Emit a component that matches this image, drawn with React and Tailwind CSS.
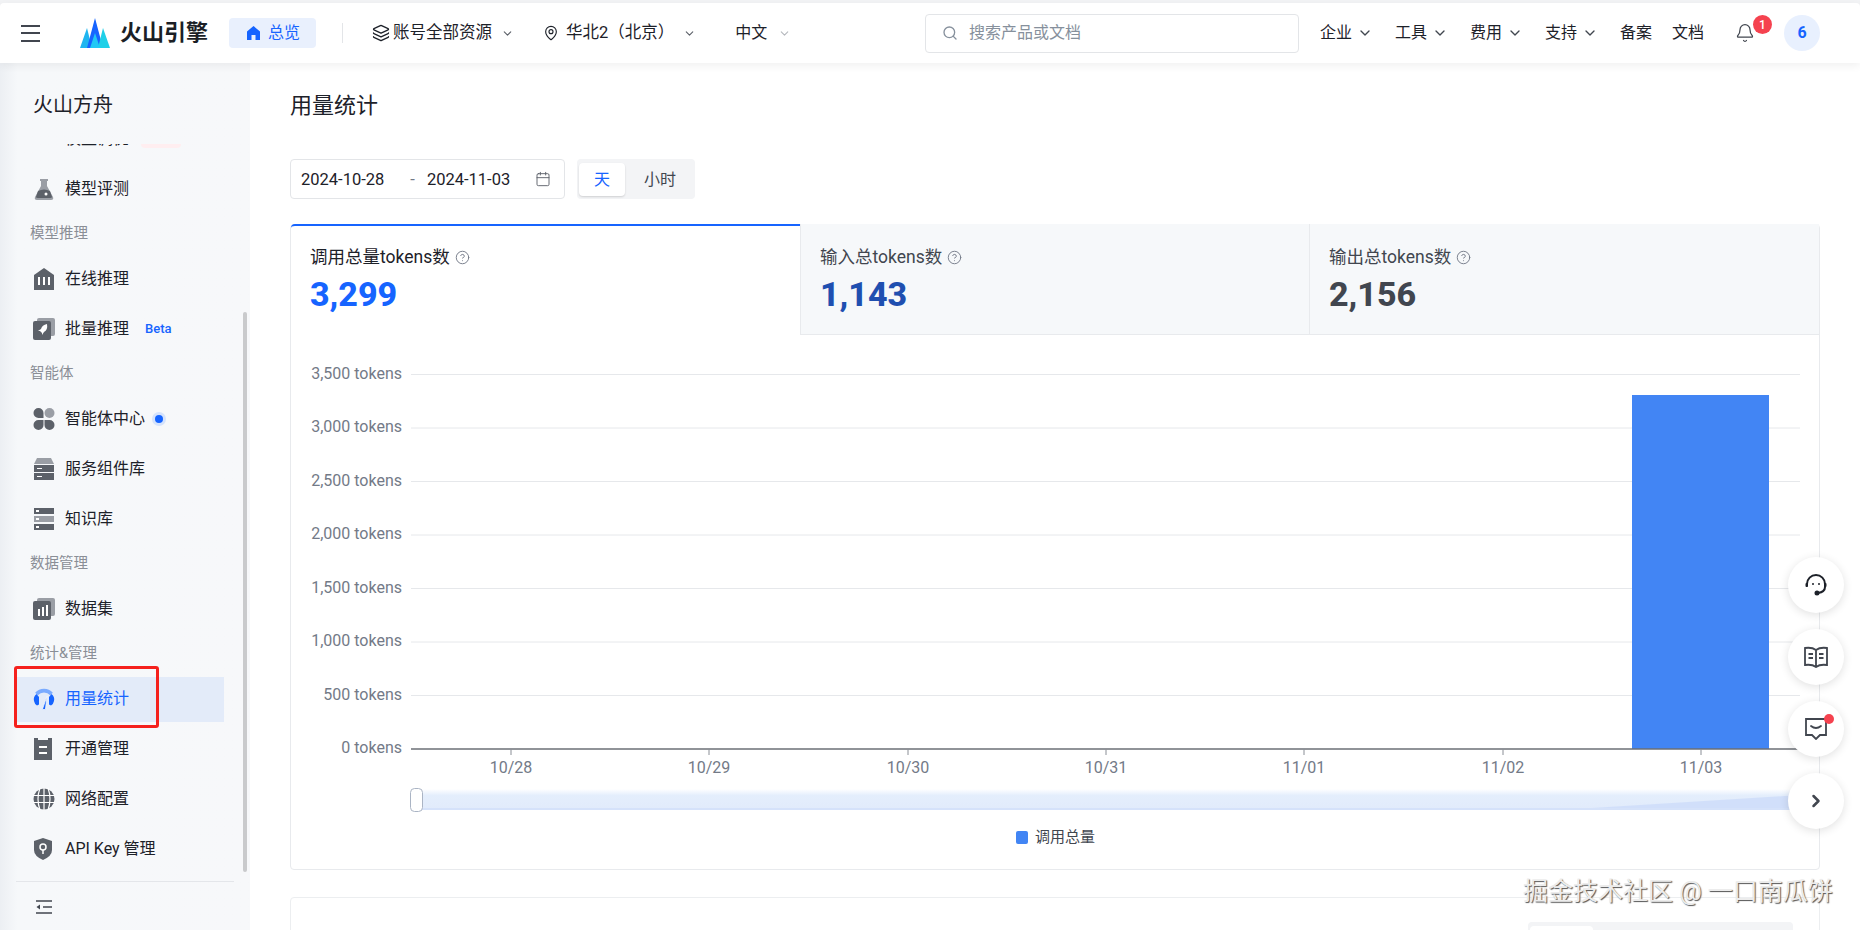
import React from 'react'
import { ChevronDown, ChevronRight, Search, Calendar, CircleHelp, Bell, MapPin, Layers } from 'lucide-react'

const fontStack = "font-['Roboto','Noto_Sans_CJK_SC',sans-serif]"

function Logo() {
    return (
        <svg width="30" height="30" viewBox="0 0 30 30">
            <polygon points="0,30 7,10 12,30" fill="#1fb5f0" />
            <polygon points="7,30 15,0 23,30" fill="#1664ff" />
            <polygon points="18,30 23,10 30,30" fill="#1fd0e8" />
            <polygon points="10,30 15,15 20,30" fill="#21c8f5" />
        </svg>
    )
}

function ItemIcon({ name }) {
    const c = '#5c6169'
    const l = '#9a9ea5'
    if (name === 'flask') return (
        <svg width="22" height="22" viewBox="0 0 22 22"><path d="M7 1h8v2h-1v5l6 11q1 3-2 3H4q-3 0-2-3l6-11V3H7z" fill={l} /><path d="M5 13q6-3 12 0l2 6q0 1-2 1H5q-2 0-2-1z" fill={c} /><circle cx="13" cy="16" r="1.5" fill="#fff" /></svg>
    )
    if (name === 'bank') return (
        <svg width="22" height="22" viewBox="0 0 22 22"><path d="M11 0l10 7v15H1V7z" fill={c} /><path d="M5 9h2v8H5zM10 9h2v8h-2zM15 9h2v8h-2z" fill="#fff" /></svg>
    )
    if (name === 'rocket') return (
        <svg width="22" height="22" viewBox="0 0 22 22"><rect x="4" y="0" width="18" height="18" rx="2" fill={l} /><rect x="0" y="3" width="18" height="19" rx="2" fill={c} /><path d="M14 6q-5 1-6 5l-3 2 2 0 2 2 0 2 2-3q4-2 3-8z" fill="#fff" /></svg>
    )
    if (name === 'clover') return (
        <svg width="22" height="22" viewBox="0 0 22 22"><path d="M5.5 0a5 5 0 0 1 5 5v5h-5a5 5 0 0 1 0-10z" fill={c} /><circle cx="16.500" cy="5" r="5" fill={l} /><path d="M5.500 22a5 5 0 0 1 0-10h5v5a5 5 0 0 1-5 5zM16.500 22a5 5 0 0 1-5-5v-5h5a5 5 0 0 1 0 10z" fill={c} /></svg>
    )
    if (name === 'server') return (
        <svg width="22" height="22" viewBox="0 0 22 22"><path d="M4 0h14l3 6H1z" fill={l} /><rect x="1" y="7" width="20" height="7" fill={c} /><rect x="1" y="15" width="20" height="7" fill={c} /><path d="M4 10h5v1H4zM4 18h5v1H4z" fill="#fff" /></svg>
    )
    if (name === 'rack') return (
        <svg width="22" height="22" viewBox="0 0 22 22"><rect x="1" y="0" width="20" height="6" fill={c} /><rect x="1" y="8" width="20" height="6" fill={l} /><rect x="1" y="16" width="20" height="6" fill={c} /><path d="M3 2h3v2H3zM3 10h3v2H3zM3 18h3v2H3z" fill="#fff" /></svg>
    )
    if (name === 'chart') return (
        <svg width="22" height="22" viewBox="0 0 22 22"><rect x="4" y="0" width="18" height="18" rx="2" fill={l} /><rect x="0" y="3" width="18" height="19" rx="2" fill={c} /><path d="M5 11h2v7H5zM9 9h2v9H9zM13 7h2v11h-2z" fill="#fff" /></svg>
    )
    if (name === 'gauge') return (
        <svg width="22" height="22" viewBox="0 0 22 22">
            <path d="M3.500 6A10 10 0 0 1 18.500 6" fill="none" stroke="#7aabff" strokeWidth="3.600" />
            <path d="M3.500 6Q0 9 1 13q.5 3 3 4.500l2-1V9zM18.500 6q3.500 3 2.500 7-.5 3-3 4.500l-2-1V9z" fill="#1664ff" />
            <path d="M14 8l-1.500 13q-1.500 1.500-3 0z" fill="#1664ff" stroke="#f3f6fd" strokeWidth="0.800" />
        </svg>
    )
    if (name === 'clip') return (
        <svg width="20" height="22" viewBox="0 0 20 22"><path d="M1 0h4v2h10V0h4v22H1z" fill={c} /><path d="M6 8h8v2H6zM6 14h8v2H6z" fill="#fff" /></svg>
    )
    if (name === 'globe') return (
        <svg width="22" height="22" viewBox="0 0 22 22"><circle cx="11" cy="11" r="10.500" fill={c} /><path d="M0 7.500h22M0 14.500h22M11 0v22M7 0q-4 11 0 22M15 0q4 11 0 22" stroke="#fff" strokeWidth="1.200" fill="none" /></svg>
    )
    if (name === 'shield') return (
        <svg width="20" height="22" viewBox="0 0 20 22"><path d="M10 0l9 3v9q0 6-9 10Q1 18 1 12V3z" fill={c} /><circle cx="10" cy="9" r="3" fill="none" stroke="#fff" strokeWidth="1.500" /><path d="M10 12v4" stroke="#fff" strokeWidth="1.500" /></svg>
    )
    return (
        <svg width="22" height="22" viewBox="0 0 22 22"><path d="M1 0h20l-10 10z" fill={l} /></svg>
    )
}

function NavItem({ icon, label, active, children }) {
    return (
        <div className="h-[50px] flex items-center">
            <div className={`h-[45px] w-[209px] ml-[15px] pl-[18px] flex items-center ${active ? 'bg-[#e3ebf9] text-[#1664ff]' : 'text-[#1d2129]'}`}>
                <span className="w-[32px] shrink-0 flex items-center"><ItemIcon name={icon} /></span>
                <span className="text-base whitespace-nowrap">{label}</span>
                {children}
            </div>
        </div>
    )
}

function GroupLabel({ label }) {
    return <div className="h-10 pl-[30px] flex items-center text-[14.500px] text-[#8a8e96]">{label}</div>
}

function Sidebar() {
    return (
        <aside className="relative w-[250px] h-full shrink-0 flex flex-col bg-gradient-to-r from-[#eceff3] from-0% via-[#f6f8fa] via-[7%] to-[#f7f8fa]">
            <div className="h-[81px] shrink-0 pl-[33px] pt-[27px] text-xl leading-[30px] text-[#1d2129]">火山方舟</div>
            <div className="h-[737px] shrink-0 overflow-hidden">
                <div className="-mt-[30px]">
                    <NavItem icon="gem" label="模型调优">
                        <span className="ml-3 w-10 h-[18px] rounded-sm bg-[#ffeef0]"></span>
                    </NavItem>
                    <NavItem icon="flask" label="模型评测" />
                    <GroupLabel label="模型推理" />
                    <NavItem icon="bank" label="在线推理" />
                    <NavItem icon="rocket" label="批量推理">
                        <span className="ml-4 text-[13px] font-medium text-[#1664ff]">Beta</span>
                    </NavItem>
                    <GroupLabel label="智能体" />
                    <NavItem icon="clover" label="智能体中心">
                        <span className="ml-[7px] w-3.5 h-3.5 rounded-full bg-[#d5e3fc] flex items-center justify-center">
                            <span className="w-2 h-2 rounded-full bg-[#1664ff]"></span>
                        </span>
                    </NavItem>
                    <NavItem icon="server" label="服务组件库" />
                    <NavItem icon="rack" label="知识库" />
                    <GroupLabel label="数据管理" />
                    <NavItem icon="chart" label="数据集" />
                    <GroupLabel label="统计&管理" />
                    <NavItem icon="gauge" label="用量统计" active />
                    <NavItem icon="clip" label="开通管理" />
                    <NavItem icon="globe" label="网络配置" />
                    <NavItem icon="shield" label="API Key 管理" />
                </div>
            </div>
            <div className="mx-4 border-t border-[#e4e6ea] pl-[19px] pt-[18px]">
                <svg width="18" height="14" viewBox="0 0 18 14" fill="none" stroke="#41464f" strokeWidth="1.600">
                    <path d="M1 1h16M8 7h9M1 13h16" />
                    <path d="M5 4.500L1.500 7 5 9.500z" fill="#41464f" stroke="none" />
                </svg>
            </div>
            {/* scrollbar + highlight box sit over the list */}
            <div className="absolute left-[243px] top-[249px] w-1 h-[560px] rounded-sm bg-[#c9cacc]"></div>
            <div className="absolute left-[14px] top-[603px] w-[145px] h-[62px] rounded-[3px] border-[3.500px] border-[#f5211d]"></div>
        </aside>
    )
}

function Header() {
    return (
        <header className="relative z-10 h-[60px] shrink-0 flex items-center bg-white rounded-t shadow-[0_3px_8px_rgba(0,0,0,0.06)] text-[#1d2129] text-base">
            <div className="w-[925px] shrink-0 flex items-center">
                <div className="ml-[21px] w-[19px] flex flex-col gap-[5.500px]">
                    <span className="h-0.5 bg-[#41464f]"></span>
                    <span className="h-0.5 bg-[#41464f]"></span>
                    <span className="h-0.5 bg-[#41464f]"></span>
                </div>
                <div className="ml-[40px] flex items-center gap-[10px]">
                    <Logo />
                    <span className="text-[22px] font-bold leading-none tracking-normal text-[#1b1f26]">火山引擎</span>
                </div>
                <div className="ml-[21px] w-[87px] h-[30px] pl-[18px] flex items-center gap-[8px] rounded bg-[#e9f0fd] text-[#1664ff]">
                    <svg width="13" height="14" viewBox="0 0 13 14">
                        <path d="M6.500 0L13 5.500V14H8.500V9h-4v5H0V5.500z" fill="#1664ff" />
                    </svg>
                    <span>总览</span>
                </div>
                <span className="ml-[26px] w-px h-5 bg-[#e3e5e8]"></span>
                <div className="ml-[29px] flex items-center text-[16.500px]">
                    <Layers size={18} strokeWidth={1.700} />
                    <span className="ml-[3px]">账号全部资源</span>
                    <ChevronDown size={13} className="ml-[9px] text-[#5c6169]" />
                </div>
                <div className="ml-[29px] flex items-center text-[16.500px]">
                    <MapPin size={16} strokeWidth={1.700} />
                    <span className="ml-[7px]">华北2（北京）</span>
                    <ChevronDown size={13} className="ml-[9px] text-[#5c6169]" />
                </div>
                <div className="ml-[39px] flex items-center">
                    <span>中文</span>
                    <ChevronDown size={13} className="ml-[11px] text-[#b5b8bd]" />
                </div>
            </div>
            <div className="w-[374px] h-[39px] shrink-0 flex items-center pl-[16px] rounded border border-[#e3e5e8] text-[#86909c]">
                <Search size={16} />
                <span className="ml-[11px]">搜索产品或文档</span>
            </div>
            <div className="ml-[21px] flex items-center">
                {['企业', '工具', '费用', '支持'].map((t) => (
                    <div key={t} className="w-[75px] flex items-center gap-[5px]">
                        <span>{t}</span>
                        <ChevronDown size={16} strokeWidth={2} className="text-[#41464f]" />
                    </div>
                ))}
                <span>备案</span>
                <span className="ml-5">文档</span>
            </div>
            <div className="relative ml-[31px]">
                <Bell size={20} strokeWidth={1.500} className="text-[#41464f]" />
                <span className="absolute -top-[8px] left-[18px] w-[19px] h-[19px] rounded-full bg-[#f5424f] text-white text-xs font-medium flex items-center justify-center">1</span>
            </div>
            <div className="ml-[29px] w-9 h-9 rounded-full bg-[#e8f0fe] text-[#1664ff] text-base font-bold flex items-center justify-center">6</div>
        </header>
    )
}

function StatTab({ label, value, active, last, valueColor }) {
    return (
        <div className={`h-[111px] pt-[21px] ${last ? 'flex-1' : 'w-[509px]'} ${active ? 'bg-white border-t-2 border-[#1664ff] rounded-tl pl-[19px]' : 'bg-[#f6f8fa] border-l border-b border-[#e8eaed] pl-[19px]'}`}>
            <div className={`flex items-center h-6 text-[17.500px] ${active ? 'text-[#1d2129] -mt-0.5' : 'text-[#41464f]'}`}>
                <span>{label}</span>
                <CircleHelp size={15} strokeWidth={1.500} className="ml-[5px] text-[#737a87]" />
            </div>
            <div className={`mt-[5px] text-[34px] leading-10 font-extrabold ${valueColor}`}>{value}</div>
        </div>
    )
}

function UsageChart() {
    const grid = [
        ['3,500 tokens', 374.500],
        ['3,000 tokens', 428],
        ['2,500 tokens', 481.500],
        ['2,000 tokens', 535],
        ['1,500 tokens', 588.500],
        ['1,000 tokens', 642],
        ['500 tokens', 695.500],
    ]
    const ticks = [['10/28', 511], ['10/29', 709], ['10/30', 908], ['10/31', 1106], ['11/01', 1304], ['11/02', 1503], ['11/03', 1701]]
    return (
        <svg width="1528" height="535" viewBox="291 335 1528 535" className="block" fontFamily="Roboto, sans-serif">
            <defs>
                <linearGradient id="sliderFill" x1="0" y1="0" x2="0" y2="1">
                    <stop offset="0" stopColor="#ffffff" />
                    <stop offset="0.3" stopColor="#e4eefc" />
                    <stop offset="1" stopColor="#e1ebfb" />
                </linearGradient>
            </defs>
            {grid.map(([t, y]) => (
                <g key={t}>
                    <line x1="411" x2="1800" y1={y} y2={y} stroke="#e6e8eb" />
                    <text x="402" y={y + 4} textAnchor="end" fontSize="16" fill="#737a87">{t}</text>
                </g>
            ))}
            <text x="402" y="753" textAnchor="end" fontSize="16" fill="#737a87">0 tokens</text>
            <rect x="1632" y="395" width="137" height="354" fill="#4285f4" />
            <line x1="411" x2="1800" y1="749" y2="749" stroke="#6b6f76" strokeWidth="1.500" />
            {ticks.map(([t, x]) => (
                <g key={t}>
                    <line x1={x} x2={x} y1="749" y2="755" stroke="#8a8e96" />
                    <text x={x} y="773" textAnchor="middle" fontSize="16" fill="#737a87">{t}</text>
                </g>
            ))}
            <rect x="420" y="789" width="1380" height="21" fill="url(#sliderFill)" />
            <polygon points="1560,810 1800,795 1800,810" fill="#d1dffa" />
            <rect x="420" y="808" width="1380" height="2" fill="#d5e2fa" />
            <rect x="410.500" y="788.500" width="12" height="23" rx="4" fill="#fff" stroke="#aab4c4" strokeWidth="1" />
            <rect x="1016" y="831" width="12" height="13" rx="2" fill="#4285f4" />
            <text x="1035" y="842" fontSize="15" fill="#41464f" fontFamily="'Noto Sans CJK SC', sans-serif">调用总量</text>
        </svg>
    )
}

function Main() {
    return (
        <main className="flex-1 h-full overflow-hidden bg-white pl-10 pr-10">
            <h1 className="mt-[29px] text-[22px] leading-7 font-normal text-[#1d2129]">用量统计</h1>
            <div className="mt-[39px] flex items-center gap-3 text-base">
                <div className="w-[275px] h-10 flex items-center pl-[10px] pt-[3px] rounded border border-[#e3e5e8] text-[#1d2129] text-[16.500px]">
                    <span>2024-10-28</span>
                    <span className="ml-[26px] text-[#737a87]">-</span>
                    <span className="ml-[12px]">2024-11-03</span>
                    <Calendar size={16} strokeWidth={1.400} className="ml-[25px] -mt-[3px] text-[#5c6169]" />
                </div>
                <div className="w-[118px] h-10 flex items-center px-[2px] pt-[1px] rounded bg-[#f3f4f6]">
                    <div className="w-[46px] h-[33px] flex items-center justify-center rounded-sm bg-white shadow-[0_1px_2px_rgba(0,0,0,0.15)] text-[#1664ff]">天</div>
                    <div className="ml-[19px] text-[#41464f]">小时</div>
                </div>
            </div>
            <section className="mt-[25px] h-[646px] rounded border border-[#e8eaed]">
                <div className="flex -mt-px">
                    <StatTab label="调用总量tokens数" value="3,299" active valueColor="text-[#1664ff]" />
                    <StatTab label="输入总tokens数" value="1,143" valueColor="text-[#1f4fb0]" />
                    <StatTab label="输出总tokens数" value="2,156" last valueColor="text-[#41464f]" />
                </div>
                <UsageChart />
            </section>
            <section className="mt-[27px] h-[200px] rounded border border-[#eceef0] pt-6 flex justify-end pr-[26px]">
                <div className="w-[265px] h-[40px] bg-[#f3f4f6] rounded p-[4px] pl-[2px]">
                    <div className="w-[63px] h-full rounded-sm bg-white"></div>
                </div>
            </section>
        </main>
    )
}

function FloatButton({ children }) {
    return (
        <div className="w-14 h-14 rounded-full bg-white shadow-[0_2px_10px_rgba(0,0,0,0.12)] flex items-center justify-center relative text-[#41464f]">
            {children}
        </div>
    )
}

function FloatBar() {
    return (
        <div className="absolute left-[1788px] top-[557px] flex flex-col gap-4">
            <FloatButton>
                <svg width="24" height="24" viewBox="0 0 24 24" fill="none" stroke="#1d2129" strokeWidth="2">
                    <path d="M3 13V11a9 9 0 0 1 18 0v3q0 5-7 6" strokeLinecap="round" />
                    <circle cx="9" cy="11" r="1" fill="#1d2129" stroke="none" />
                    <circle cx="15" cy="11" r="1" fill="#1d2129" stroke="none" />
                    <circle cx="13" cy="20" r="1.500" fill="#1d2129" />
                    <rect x="1.500" y="10" width="2" height="4" rx="1" fill="#1d2129" stroke="none" />
                    <rect x="20.500" y="10" width="2" height="4" rx="1" fill="#1d2129" stroke="none" />
                </svg>
            </FloatButton>
            <FloatButton>
                <svg width="24" height="22" viewBox="0 0 24 22" fill="none" stroke="#41464f" strokeWidth="1.800">
                    <path d="M12 4Q8 1 1 2v17q7-1 11 2 4-3 11-2V2Q16 1 12 4zM12 4v17" />
                    <path d="M4.500 8H9M4.500 12H9M15 8h4.500M15 12h4.500" />
                </svg>
            </FloatButton>
            <FloatButton>
                <svg width="22" height="22" viewBox="0 0 22 22" fill="none" stroke="#41464f" strokeWidth="1.800">
                    <path d="M1 1h20v16h-6l-4 4-4-4H1z" />
                    <path d="M6 8q5 4 10 0" strokeLinecap="round" />
                </svg>
                <span className="absolute right-[10px] top-[13px] w-2.5 h-2.5 rounded-full bg-[#f5424f]"></span>
            </FloatButton>
            <FloatButton>
                <ChevronRight size={20} strokeWidth={3} className="text-[#41464f]" />
            </FloatButton>
        </div>
    )
}

export default function App() {
    return (
        <div className={`relative w-[1860px] h-[930px] overflow-hidden bg-[#f2f3f5] pt-[3px] flex flex-col ${fontStack}`}>
            <Header />
            <div className="flex-1 min-h-0 flex">
                <Sidebar />
                <Main />
            </div>
            <FloatBar />
            <div className="absolute left-[1523px] top-[876px] text-[25px] leading-8 whitespace-nowrap text-[#ececec] [text-shadow:1px_1px_1px_#555]">掘金技术社区 @ 一口南瓜饼</div>
        </div>
    )
}
